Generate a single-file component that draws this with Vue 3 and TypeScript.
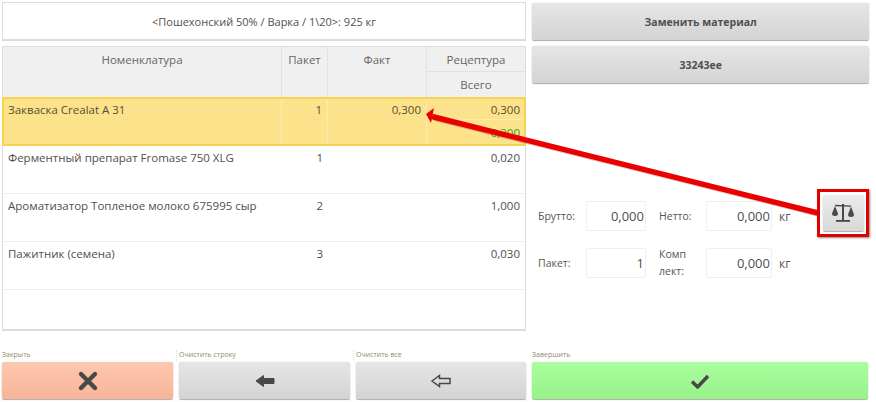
<template>
  <div class="screen">
    <div class="main">
      <section class="left">
        <div class="title">&lt;Пошехонский 50% / Варка / 1\20&gt;: 925 кг</div>
        <div class="table">
          <div class="thead">
            <div class="th">Номенклатура</div>
            <div class="th">Пакет</div>
            <div class="th">Факт</div>
            <div class="th th-group">
              <div class="th-top">Рецептура</div>
              <div class="th-bottom">Всего</div>
            </div>
          </div>
          <div
            v-for="row in rows"
            :key="row.name"
            class="row"
            :class="{ 'row--active': row.active }"
          >
            <div class="td">{{ row.name }}</div>
            <div class="td td--right">{{ row.pack }}</div>
            <div class="td td--right">{{ row.fact }}</div>
            <div class="td td--right td--recipe">
              <div class="recipe-top">{{ row.total }}</div>
              <div v-if="row.active" class="recipe-bottom">0,300</div>
            </div>
          </div>
        </div>
      </section>

      <section class="right">
        <button class="btn btn--top" type="button">Заменить материал</button>
        <button class="btn btn--top" type="button">33243ee</button>
        <div class="form">
          <div class="form-row">
            <span class="lbl">Брутто:</span>
            <span class="inp inp--a">0,000</span>
            <span class="lbl lbl--b">Нетто:</span>
            <span class="inp inp--b">0,000</span>
            <span class="unit">кг</span>
            <div class="scale-frame">
              <button class="btn scale-btn" type="button" aria-label="Весы">
                <svg width="22" height="20" viewBox="0 0 22 20">
                  <g fill="#484848">
                    <path d="M10 1h2v16h-2z" />
                    <path d="M4 17h14v1.800H4z" />
                    <path d="M3 1.800 19 2.400v1.400L3 3.200z" />
                    <path d="M3 3 6 10.500A3 2.500 0 0 1 0 10.500z" />
                    <path d="M19 3.600 22 11.500A3 2.500 0 0 1 16 11.500z" />
                  </g>
                </svg>
              </button>
            </div>
          </div>
          <div class="form-row form-row--second">
            <span class="lbl">Пакет:</span>
            <span class="inp inp--a">1</span>
            <span class="lbl lbl--b lbl--wrap">Комп<br />лект:</span>
            <span class="inp inp--b">0,000</span>
            <span class="unit">кг</span>
          </div>
        </div>
      </section>
    </div>

    <footer class="actions">
      <div v-for="a in actions" :key="a.label" class="action" :class="`action--${a.kind}`">
        <span class="action-label">{{ a.label }}</span>
        <button class="btn action-btn" type="button" :aria-label="a.label">
          <svg width="22" height="22" viewBox="0 0 22 22">
            <path
              v-if="a.kind === 'close'"
              d="M4 4 18 18M18 4 4 18"
              fill="none"
              stroke="#484848"
              stroke-width="4.400"
              stroke-linecap="round"
            />
            <path
              v-else-if="a.kind === 'line'"
              d="M2 11 9.500 5.500V8.500H20V13.500H9.500V16.500z"
              fill="#484848"
              stroke="#484848"
              stroke-linejoin="round"
            />
            <path
              v-else-if="a.kind === 'all'"
              d="M2 11 9.500 5.500V8.500H20V13.500H9.500V16.500z"
              fill="none"
              stroke="#484848"
              stroke-width="1.500"
            />
            <path
              v-else
              d="M3 11.500 8.600 17 19 6"
              fill="none"
              stroke="#484848"
              stroke-width="3.400"
              stroke-linejoin="round"
            />
          </svg>
        </button>
      </div>
    </footer>

    <!-- annotation arrow from the scale button to the "Факт" cell -->
    <svg class="annotation" width="876" height="402" viewBox="0 0 876 402">
      <path d="M818 213 433 117" stroke="#8a1a14" stroke-opacity="0.3" stroke-width="5.500" fill="none" transform="translate(1 1)" />
      <path d="M818 213 432 116.500" stroke="#ea0000" stroke-width="5.500" fill="none" />
      <path d="M426 114 434 108 431 123z" fill="#ea0000" />
    </svg>
  </div>
</template>

<script setup lang="ts">
interface Row {
  name: string;
  pack: string;
  fact: string;
  total: string;
  active?: boolean;
}

interface Action {
  label: string;
  kind: "close" | "line" | "all" | "done";
}

const rows: Row[] = [
  { name: "Закваска Crealat A 31", pack: "1", fact: "0,300", total: "0,300", active: true },
  { name: "Ферментный препарат Fromase 750 XLG", pack: "1", fact: "", total: "0,020" },
  { name: "Ароматизатор Топленое молоко 675995 сыр", pack: "2", fact: "", total: "1,000" },
  { name: "Пажитник (семена)", pack: "3", fact: "", total: "0,030" },
];

const actions: Action[] = [
  { label: "Закрыть", kind: "close" },
  { label: "Очистить строку", kind: "line" },
  { label: "Очистить все", kind: "all" },
  { label: "Завершить", kind: "done" },
];
</script>

<style>
html,
body {
  margin: 0;
  background: #fff;
  overflow: hidden;
}
</style>

<style scoped>
.screen {
  position: relative;
  width: 876px;
  height: 402px;
  box-sizing: border-box;
  padding: 2px 8px 0 2px;
  font-family: "Open Sans", "Noto Sans", sans-serif;
  font-size: 11.500px;
  color: #555;
  background: #fff;
}

.main {
  display: flex;
  gap: 6px;
  height: 329px;
}

.left {
  width: 524px;
  display: flex;
  flex-direction: column;
  gap: 5px;
}

.title {
  height: 39px;
  box-sizing: border-box;
  border: 1px solid #dcdcdc;
  border-bottom-width: 2px;
  display: flex;
  align-items: center;
  justify-content: center;
  font-size: 11px;
  color: #505050;
}

.table {
  flex: 1;
  box-sizing: border-box;
  border: 1px solid #dcdcdc;
  border-bottom-width: 2px;
}

.thead,
.row {
  display: grid;
  grid-template-columns: 279px 46px 99px 98px;
}

.thead {
  height: 50px;
  background: #f0f0f0;
  color: #666;
}

.th {
  padding-top: 5px;
  text-align: center;
  border-right: 1px solid #e2e2e2;
  box-sizing: border-box;
  line-height: 15px;
}

.th:last-child {
  border-right: 0;
}

.th-group {
  padding-top: 0;
  display: flex;
  flex-direction: column;
}

.th-top {
  height: 25px;
  box-sizing: border-box;
  padding-top: 5px;
  border-bottom: 1px solid #e2e2e2;
}

.th-bottom {
  padding-top: 5px;
}

.row {
  height: 48px;
  box-sizing: border-box;
  border-bottom: 1px solid #efefef;
  color: #4f4f4f;
}

.row--active {
  height: 49px;
  grid-template-columns: 278px 46px 99px 97px;
  background: #fde28c;
  border: 2px solid #f5d352;
  margin: 0 -1px;
  color: #555030;
}

.td {
  padding: 4px 5px 0 5px;
  line-height: 16px;
  white-space: nowrap;
}

.row--active .td {
  padding-top: 3px;
  padding-left: 4px;
  border-right: 1px solid #fdeab0;
}

.row--active .td:last-child {
  border-right: 0;
  padding: 0;
}

.td--right {
  text-align: right;
}

.row--active .recipe-top {
  height: 21px;
  padding: 3px 4px 0 0;
  box-sizing: border-box;
  border-bottom: 1px solid #fdeab0;
}

.recipe-bottom {
  padding: 5px 4px 0 0;
  color: #2fa30f;
}

.right {
  flex: 1;
  display: flex;
  flex-direction: column;
  gap: 6px;
}

.btn {
  display: flex;
  align-items: center;
  justify-content: center;
  padding: 0;
  border: 0;
  border-radius: 2px;
  box-shadow: 0 0 1px #bbb, 0 1px 1px #aaa;
  background: linear-gradient(#e6e6e6, #d3d3d3);
  font-family: inherit;
  color: #505050;
}

.btn--top {
  height: 37px;
  font-size: 10.500px;
  font-weight: 700;
}

.btn--top:first-child {
  margin-top: 1px;
}

.form {
  margin-top: 112px;
  padding-left: 6px;
  display: flex;
  flex-direction: column;
  gap: 17px;
  font-size: 10.500px;
}

.form-row {
  display: flex;
  align-items: center;
  height: 30px;
}

.lbl {
  width: 48px;
  color: #555;
}

.lbl--b {
  margin-left: 13px;
  width: 47px;
}

.lbl--wrap {
  line-height: 17px;
}

.inp {
  box-sizing: border-box;
  height: 30px;
  border: 1px solid #efefef;
  border-radius: 2px;
  display: flex;
  align-items: center;
  justify-content: flex-end;
  padding-right: 1px;
  font-size: 13px;
  color: #4f4f4f;
}

.inp--a {
  width: 60px;
}

.inp--b {
  width: 66px;
}

.unit {
  margin-left: 7px;
  font-size: 12px;
}

.scale-frame {
  flex: none;
  margin-left: 27px;
  width: 52px;
  height: 48px;
  margin-top: -6px;
  box-sizing: border-box;
  border: 3px solid #e00000;
  box-shadow: 1px 1px 2px #888;
  display: flex;
  align-items: center;
  justify-content: center;
}

.scale-btn {
  width: 41px;
  height: 36px;
  background: linear-gradient(#ebebeb, #d8d8d8);
}

.actions {
  margin-top: 19px;
  display: flex;
  gap: 6px;
}

.action {
  position: relative;
  width: 171px;
  display: flex;
  flex-direction: column;
}

/* faint dotted divider above the button gaps */
.action--line::before,
.action--all::before {
  content: "";
  position: absolute;
  left: -3px;
  top: 0;
  height: 12px;
  border-left: 1px dotted #e4e4e4;
}

.action--all {
  width: 170px;
}

.action--done {
  width: 336px;
}

.action-label {
  height: 12px;
  line-height: 9px;
  font-size: 7px;
  color: #8f8a6e;
  white-space: nowrap;
}

.action-btn {
  height: 37px;
}

.action--close .action-btn {
  background: linear-gradient(#fdc8b0, #f7b498);
}

.action--done .action-btn {
  background: linear-gradient(#abfd9f, #96f288);
}

.annotation {
  position: absolute;
  left: 0;
  top: 0;
  pointer-events: none;
}
</style>
